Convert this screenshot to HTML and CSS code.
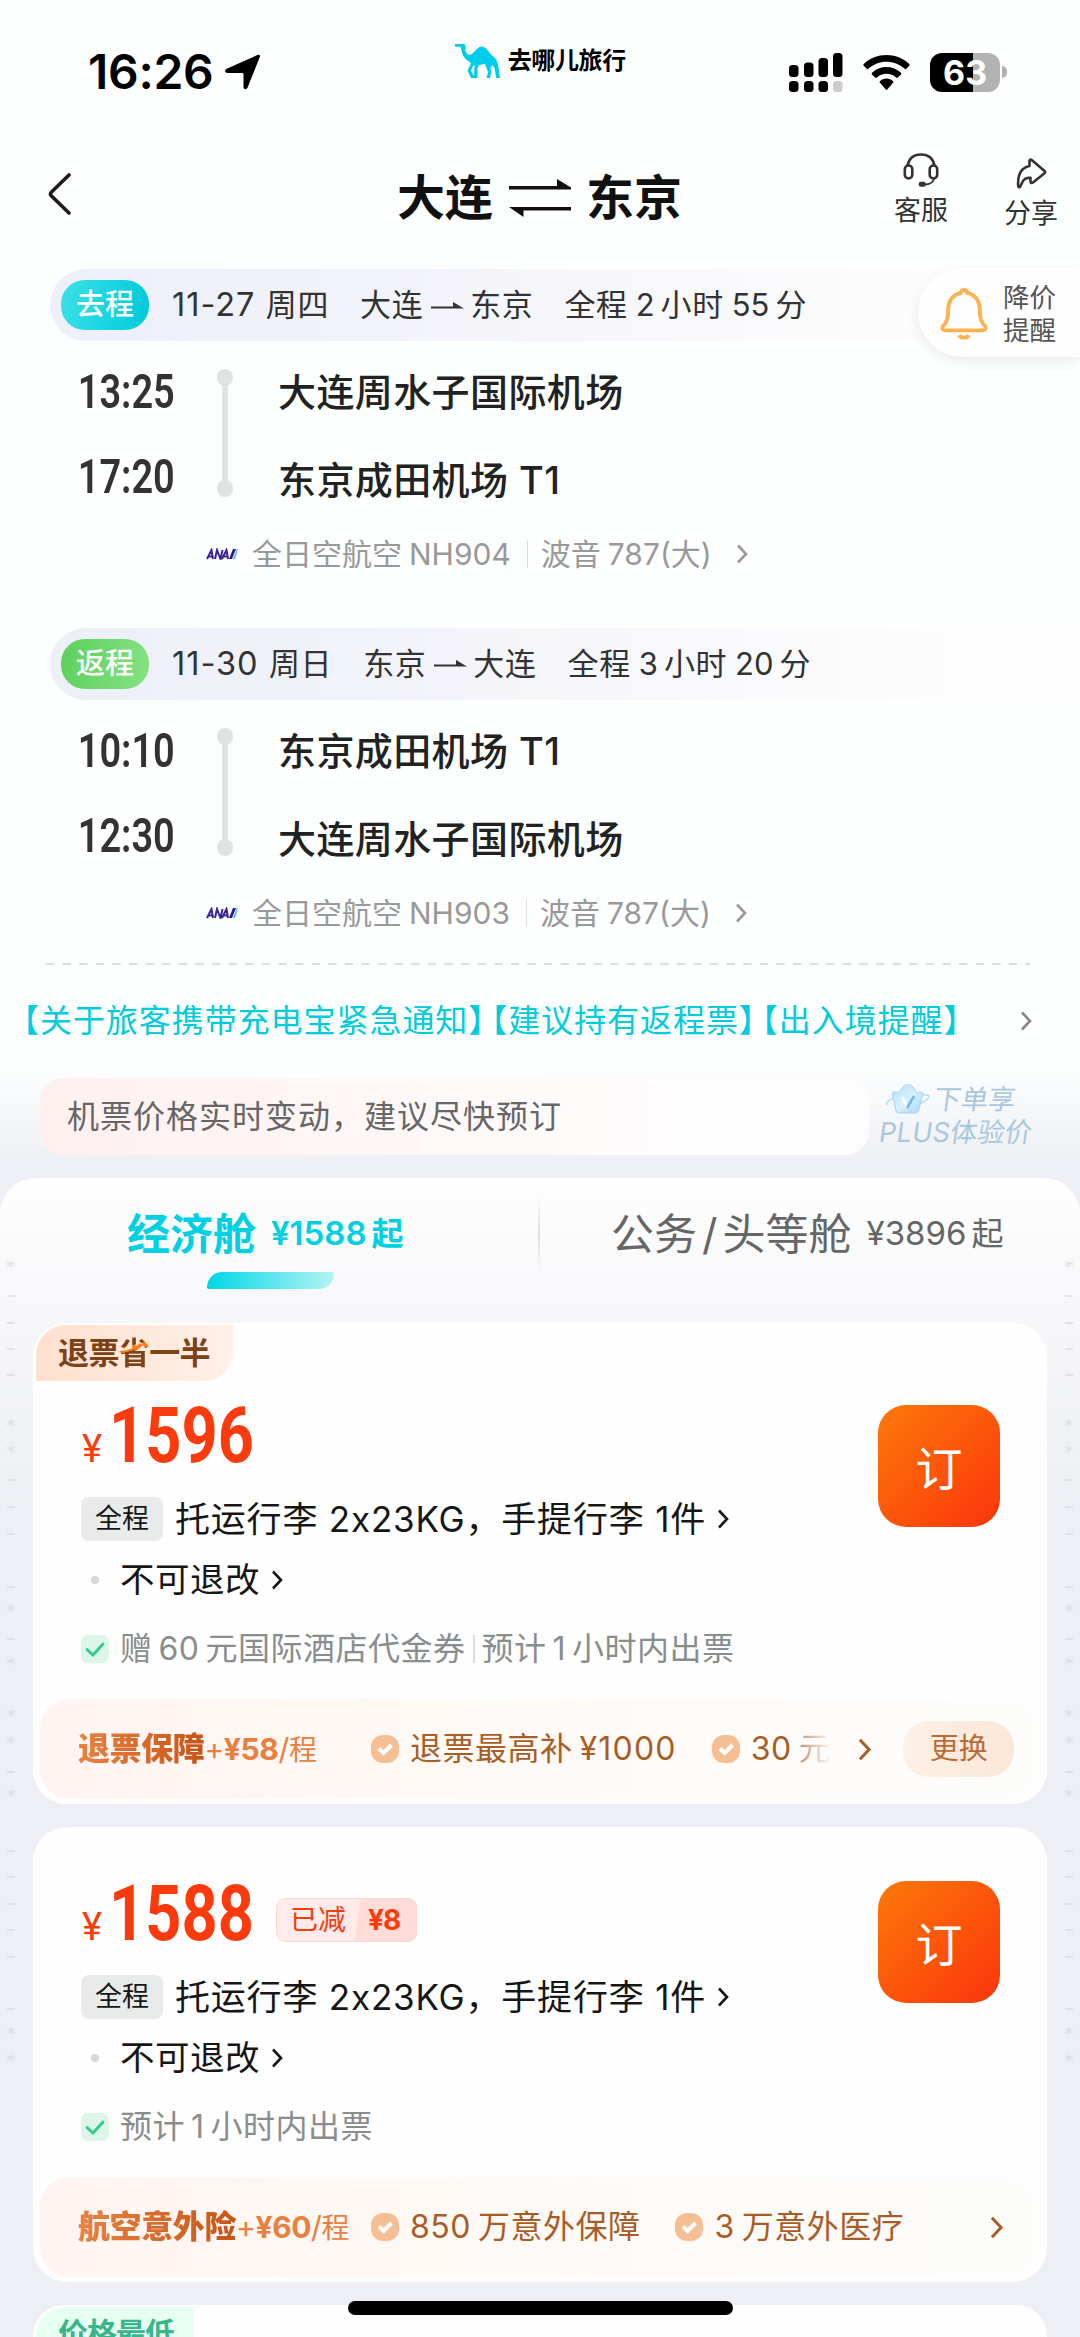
FILE: index.html
```html
<!DOCTYPE html>
<html lang="zh-CN">
<head>
<meta charset="utf-8">
<title>大连 - 东京</title>
<link rel="stylesheet" href="styles.css">
</head>
<body>
<svg class="defs" width="0" height="0">
  <defs>
    <linearGradient id="crownFill" x1="0" y1="0" x2="1" y2="1"><stop offset="0" stop-color="#b5def9"/><stop offset="0.5" stop-color="#d8f0ff"/><stop offset="1" stop-color="#a6d5f5"/></linearGradient>
    <symbol id="chev" viewBox="0 0 12 20"><path d="M2 1.5 10 10 2 18.5" fill="none" stroke="currentColor" stroke-width="2.6"/></symbol>
    <symbol id="tick" viewBox="0 0 28 28"><rect width="28" height="28" rx="7" fill="#dcf7ea"/><path d="M6 14.5 12 20 22 9" fill="none" stroke="#2fcb8b" stroke-width="2.8" stroke-linecap="round"/></symbol>
    <symbol id="seal" viewBox="0 0 28 28"><rect width="28" height="28" rx="12" fill="#f6bf93"/><path d="M8 13.5 12.6 18 20.5 10" fill="none" stroke="#fff" stroke-width="4"/></symbol>
    <symbol id="fly" viewBox="0 0 34 12"><path d="M0 7.500h33L22 1v4.500H0z" fill="#333"/></symbol>
    <symbol id="ana" viewBox="0 0 32 12"><path d="M1 11 5.5 2 7 11M3 8.5h4M9 11l2-9 3.500 9 2-9M16 11l4.500-9L22 11M18 8.500h4" fill="none" stroke="#3c2696" stroke-width="2"/><path d="M23 11 27 1h3l-4 10z" fill="#2a1a8c"/><path d="m27 11 4-10h1l-3 10z" fill="#46b5ef"/></symbol>
    <symbol id="ruler" viewBox="0 0 8 810">
      <g stroke="#d9dbe0" stroke-width="1.6">
        <path d="M0 35h8M0 62h8M0 88h8M0 114h8M0 219h8M0 246h8M0 273h8M0 326h8M0 378h8M0 511h8M0 590h8M0 616h8M0 643h8M0 669h8M0 696h8M0 748h8"/>
        <path d="M4-1v8M0 1l8 4M8 1 0 5M4 158v8M0 160l8 4M8 160l-8 4M4 184v8M0 186l8 4M8 186l-8 4M4 343v8M0 345l8 4M8 345l-8 4M4 396v8M0 398l8 4M8 398l-8 4M4 448v8M0 450l8 4M8 450l-8 4M4 475v8M0 477l8 4M8 477l-8 4M4 528v8M0 530l8 4M8 530l-8 4M4 766v8M0 768l8 4M8 768l-8 4M4 793v8M0 795l8 4M8 795l-8 4" stroke-width="1.100"/>
      </g>
    </symbol>
  </defs>
</svg>

<div class="screen">
  <header class="status">
    <span class="clock">16:26</span>
    <svg class="locate" viewBox="0 0 36 36"><path d="M34.800 3 22.500 33.800c-.9 2-4 1.800-4-.6V20.500c0-1-.5-1.500-1.500-1.500H2.500c-2.600 0-3.200-3-.8-4.200L33 .8c1.500-.6 2.500.7 1.800 2.200z"/></svg>
    <span class="brand">
      <svg class="camel" viewBox="0 0 46 34"><path fill="#00cdec" d="M0 0h9.500l1 2v5c1.500 3.500 3.500 4.500 5.500 3.500 3-1.500 5-5.500 8.500-7.500 2.500-1.300 5-.5 7 2l5 6c4.500 3 6.500 7 7 12.500L45 34h-3.800l-1.700-10-2-3-2 3 .8 4.500L35 34h-3.500l1.500-6-3-8-6 1-1.500 3V34H19l.5-13-1.500 1-2 4.500 4 7.500h-4l-3.500-7.500 3.500-7-2.500-2.500C9.500 15 7 11 6 4L5 2.800H0z"/></svg>
      <span>去哪儿旅行</span>
    </span>
    <svg class="signal" viewBox="0 0 54 39"><rect y="12" width="9.500" height="12" rx="3.500"/><rect x="15" y="9.500" width="9.500" height="14.500" rx="3.500"/><rect x="29.500" y="5" width="9.500" height="19" rx="3.500"/><rect x="44" width="9.500" height="24" rx="3.500"/><rect y="28" width="9.500" height="11" rx="3.500"/><rect x="15" y="28" width="9.500" height="11" rx="3.500"/><rect x="29.500" y="28" width="9.500" height="11" rx="3.500"/><rect x="44" y="28" width="9.500" height="11" rx="3.500" fill="#ccc"/></svg>
    <svg class="wifi" viewBox="0 0 47 35"><path d="M23.500 0C32 0 40 3 46 8.800c.8.700.8 1.500.1 2.200L43.500 13.600c-.7.700-1.400.7-2.100 0C36.500 9 30 6.700 23.500 6.700S10.500 9 5.600 13.600c-.7.700-1.400.7-2.100 0L.9 11c-.7-.7-.7-1.500.1-2.200C7 3 15 0 23.500 0zM23.500 12c5.500 0 10.500 2 14.200 5.500.8.700.8 1.500.1 2.200l-2.700 2.600c-.7.700-1.400.7-2.100.1-2.600-2.400-6-3.700-9.500-3.700s-6.900 1.300-9.500 3.700c-.7.600-1.400.6-2.100-.1l-2.700-2.600c-.7-.7-.7-1.500.1-2.200C13 14 18 12 23.500 12zM23.500 23.500c2.600 0 4.800.9 6.400 2.400.7.700.7 1.300.1 1.900l-5.500 6.400c-.6.700-1.400.7-2 0L17 27.800c-.6-.6-.6-1.200.1-1.900 1.600-1.500 3.800-2.400 6.400-2.400z"/></svg>
    <span class="battery">63</span><i class="cap"></i>
  </header>

  <nav class="nav">
    <svg class="back" viewBox="0 0 24 42"><path d="M22 2 4.500 19c-1.500 1.500-1.500 2.500 0 4L22 40" fill="none" stroke="#1c1c1c" stroke-width="3.600" stroke-linecap="round"/></svg>
    <h1 class="title"><span>大连</span><svg class="swap" viewBox="0 0 62 38"><path d="M0 7h48V0l14 8.500v2H0zM62 28h0H0l14.500 10v-6.500H62z" fill="#111"/></svg><span>东京</span></h1>
    <div class="tool help">
      <svg width="36" height="34" viewBox="0 0 36 34" fill="none" stroke="#333" stroke-width="2.600"><path d="M4.500 12.500C6 5 11 1.500 18 1.500S30 5 31.500 12.500"/><rect x="1.800" y="12.500" width="7.500" height="13" rx="3.700"/><rect x="26.700" y="12.500" width="7.500" height="13" rx="3.700"/><path d="M31 26c-1.500 4-4 5.500-9 5.500" stroke-width="1.800"/><rect x="17" y="30" width="4.500" height="2.500" rx="1" fill="#333"/></svg>
      <span>客服</span>
    </div>
    <div class="tool share">
      <svg width="31" height="31" viewBox="0 0 31 31" fill="none" stroke="#333" stroke-width="2.600" stroke-linejoin="round"><path d="M13.500 2.800c0-1.200 1.200-1.700 2.200-.8L28.500 13c.9.800.9 1.500 0 2.300L17 24.500c-1.400 1-2.500.6-2.500-.7v-4c-3.500-.2-6 .5-7.800 3.700l-2.500 5c-.6 1-1.900.8-2-.4C1.500 18 4 10 13.500 8z"/></svg>
      <span>分享</span>
    </div>
  </nav>

  <main class="itinerary">
    <section class="leg">
      <div class="leg-head">
        <span class="way go">去程</span>
        <span class="date"><span>11-27</span> 周四</span>
        <span class="cities">大连<svg><use href="#fly"/></svg>东京</span>
        <span>全程<b>2</b>小时<b>55</b>分</span>
      </div>
      <div class="stops">
        <div class="times"><span>13:25</span><span>17:20</span></div>
        <div class="track"></div>
        <div class="ports"><span>大连周水子国际机场</span><span>东京成田机场 T1</span></div>
      </div>
      <div class="plane"><svg class="ana"><use href="#ana"/></svg><span>全日空航空<b>NH904</b></span><i></i><span>波音<b>787(</b>大<b class="par">)</b></span><svg class="chev"><use href="#chev"/></svg></div>
    </section>
    <section class="leg">
      <div class="leg-head">
        <span class="way return">返程</span>
        <span class="date"><span>11-30</span> 周日</span>
        <span class="cities">东京<svg><use href="#fly"/></svg>大连</span>
        <span>全程<b>3</b>小时<b>20</b>分</span>
      </div>
      <div class="stops">
        <div class="times"><span>10:10</span><span>12:30</span></div>
        <div class="track"></div>
        <div class="ports"><span>东京成田机场 T1</span><span>大连周水子国际机场</span></div>
      </div>
      <div class="plane"><svg class="ana"><use href="#ana"/></svg><span>全日空航空<b>NH903</b></span><i></i><span>波音<b>787(</b>大<b class="par">)</b></span><svg class="chev"><use href="#chev"/></svg></div>
    </section>
    <svg class="rule" viewBox="0 0 984 2"><path d="M0 1h984" stroke="#dcdedd" stroke-width="2" stroke-dasharray="8.300 8.300"/></svg>
    <div class="notice"><span>【关于旅客携带充电宝紧急通知】</span><span>【建议持有返程票】</span><span>【出入境提醒】</span><svg class="chev"><use href="#chev"/></svg></div>
  </main>

  <aside class="alert">
    <svg width="48" height="54" viewBox="0 0 50 54" fill="none" stroke="#ffb04f" stroke-width="4"><path d="M25 2c2 0 3 1 3.500 3C37 7 41.500 14 41.500 22c0 9 1 13 5 17 2 3 1 5-2 5h-39c-3 0-4-2-2-5 4-4 5-8 5-17C8.500 14 13 7 21.500 5 22 3 23 2 25 2z"/><path d="M20 49c1.500 3.500 8.500 3.500 10 0"/></svg>
    <span>降价<br>提醒</span>
  </aside>

  <div class="promo">
    <div class="tip">机票价格实时变动，建议尽快预订</div>
    <div class="plus">
      <div><svg width="46" height="30" viewBox="0 0 46 30"><path d="M2 21c-3-3 5-7 14-9M38 11c9-1 7 4-2 8" fill="none" stroke="#b5dcf4" stroke-width="1.500"/><path d="M7 9c2-1.500 4-1.500 6 0l5-6c3-3 7-3 10 0l4 6c2-1.500 4-1.500 6 0l-4 16c-.5 3-2 4-5 4H15c-3 0-4-1-4.500-4z" fill="url(#crownFill)" stroke="#a3d5f5"/><path d="m17 13 5 10" stroke="#fff" stroke-width="3"/><path d="m29 12-7 12" stroke="#75b9e6" stroke-width="2.500"/></svg>下单享</div>
      <div>PLUS体验价</div>
    </div>
  </div>

  <div class="fares">
    <div class="tabs">
      <div class="tab active"><strong>经济舱</strong><span>¥1588<em>起</em></span></div>
      <div class="tab"><strong>公务<i>/</i>头等舱</strong><span>¥3896<em>起</em></span></div>
    </div>

    <article class="card tagged">
      <span class="ribbon">退票<span class="save">省</span>一半</span>
      <div class="body">
        <div class="info">
          <div class="price"><small>¥</small><span class="num">1596</span></div>
          <div class="line bag"><span class="chip">全程</span><span>托运行李 2x23KG，手提行李 1件</span><svg class="chev"><use href="#chev"/></svg></div>
          <div class="line"><i class="dot"></i><span>不可退改</span><svg class="chev"><use href="#chev"/></svg></div>
          <div class="perk"><svg class="tick"><use href="#tick"/></svg><span>赠<b>60</b>元国际酒店代金券</span><i></i><span>预计<b class="one">1</b>小时内出票</span></div>
        </div>
        <button class="book">订</button>
      </div>
      <div class="cover">
        <span class="plan"><strong>退票保障</strong><em>+<b>¥58</b>/<small>程</small></em></span>
        <span class="benefit"><svg class="tick"><use href="#seal"/></svg>退票最高补<b>¥1000</b></span>
        <span class="benefit second cut"><svg class="tick"><use href="#seal"/></svg><b class="first">30</b><span class="fade">元</span></span>
        <svg class="chev"><use href="#chev"/></svg>
        <span class="swap-btn">更换</span>
      </div>
    </article>

    <article class="card">
      <div class="body">
        <div class="info">
          <div class="price"><small>¥</small><span class="num">1588</span><span class="off"><span>已减</span><b>¥8</b></span></div>
          <div class="line bag"><span class="chip">全程</span><span>托运行李 2x23KG，手提行李 1件</span><svg class="chev"><use href="#chev"/></svg></div>
          <div class="line"><i class="dot"></i><span>不可退改</span><svg class="chev"><use href="#chev"/></svg></div>
          <div class="perk"><svg class="tick"><use href="#tick"/></svg><span>预计<b class="one">1</b>小时内出票</span></div>
        </div>
        <button class="book">订</button>
      </div>
      <div class="cover">
        <span class="plan"><strong>航空意外险</strong><em>+<b>¥60</b>/<small>程</small></em></span>
        <span class="benefit"><svg class="tick"><use href="#seal"/></svg><b class="first">850</b>万意外保障</span>
        <span class="benefit second"><svg class="tick"><use href="#seal"/></svg><b class="first">3</b>万意外医疗</span>
        <svg class="chev last"><use href="#chev"/></svg>
      </div>
    </article>

    <article class="card tagged"><span class="ribbon green">价格最低</span></article>
    <svg class="ruler left"><use href="#ruler"/></svg>
    <svg class="ruler right"><use href="#ruler"/></svg>
  </div>
  <div class="home"></div>
</div>
</body>
</html>
```
FILE: styles.css
```css
* { box-sizing: border-box; }
body { margin: 0; background: #fdfdfd; font-family: "Inter", "Noto Sans CJK SC", sans-serif; color: #222; }
.defs { position: absolute; }
svg { display: block; flex: none; }
i, em { font-style: normal; }
b { font-weight: inherit; }
.screen { position: relative; width: 1080px; height: 2337px; overflow: hidden; background: linear-gradient(#fdfefe 1065px, #eeeff4 1165px); }

/* status bar */
.status { height: 144px; padding: 0 73px 0 88px; display: flex; align-items: center; color: #000; }
.clock { font-size: 48px; font-weight: 600; line-height: 56px; letter-spacing: -0.3px; width: 137px; white-space: nowrap; }
.locate { width: 36px; height: 36px; }
.brand { display: flex; align-items: center; gap: 7px; margin-left: 194px; padding-bottom: 22px; font-size: 24px; font-weight: 700; line-height: 34px; letter-spacing: -0.4px; width: 335px; }
.camel { width: 46px; height: 34px; }
.signal { width: 54px; height: 39px; }
.wifi { width: 47px; height: 35px; margin-left: 20px; }
.battery { width: 70px; height: 39px; margin-left: 20px; border-radius: 12px; background: linear-gradient(90deg, #000 62%, #b2b2b2 62%); color: #fff; font-size: 34px; line-height: 39px; font-weight: 700; text-align: center; }
.cap { width: 5px; height: 12px; margin-left: 2px; border-radius: 0 6px 6px 0; background: #b2b2b2; }

/* navigation */
.nav { height: 125px; display: flex; align-items: flex-start; padding-left: 47px; }
.back { width: 24px; height: 42px; margin-top: 29px; }
.title { display: flex; align-items: center; margin: 22px 0 0 326px; font-size: 48px; line-height: 64px; font-weight: 700; color: #111; width: 286px; }
.swap { width: 62px; height: 38px; margin: 0 15px 0 16px; }
.tool { display: flex; flex-direction: column; align-items: center; font-size: 27px; line-height: 32px; color: #333; }
.help { margin: 9px 0 0 211px; gap: 8px; }
.share { margin: 14px 0 0 56px; gap: 9px; }

/* itinerary */
.itinerary { height: 809px; }
.leg { height: 358.5px; }
.leg-head { height: 72px; margin-left: 50px; padding-left: 11px; border-radius: 36px 0 0 36px; background: linear-gradient(90deg, #edeff9 0, #f2f3f9 30%, #fdfdfd 900px); display: flex; align-items: center; font-size: 31px; line-height: 40px; color: #333; letter-spacing: 0.6px; }
.leg-head b { margin: 0 6px 0 8px; letter-spacing: 0; }
.way { width: 88px; height: 50px; border-radius: 24px; color: #fff; font-size: 29px; line-height: 50px; text-align: center; font-weight: 500; letter-spacing: 0; }
.go { background: linear-gradient(100deg, #3be0e6, #00cad9); }
.return { background: linear-gradient(100deg, #5bd05b, #86e283); }
.date { margin-left: 23px; word-spacing: 1px; }
.date span { font-size: 32.5px; letter-spacing: 1px; }
.cities { display: flex; align-items: center; margin: 0 31px; }
.cities svg { width: 34px; height: 12px; margin: 3px 5px 0 8px; }
.stops { display: flex; height: 171px; padding: 25px 0 0 74px; }
.times { width: 101px; display: flex; flex-direction: column; gap: 33px; align-items: flex-end; font-family: "Roboto", sans-serif; font-weight: 600; font-size: 48px; line-height: 52px; color: #333; }
.times span { transform: scaleX(0.79); transform-origin: right; }
.track { position: relative; width: 16px; height: 128px; margin: 3px 0 0 42px; background: linear-gradient(#e0e4e4, #e0e4e4) center / 6px 112px no-repeat; }
.track::before, .track::after { content: ""; position: absolute; left: 0; width: 16px; height: 17px; border-radius: 8px; background: #dfe3e3; }
.track::before { top: 0; }
.track::after { bottom: 0; }
.ports { margin-left: 45px; display: flex; flex-direction: column; gap: 36px; font-size: 38px; line-height: 52px; font-weight: 500; letter-spacing: 0.4px; color: #222; }
.plane { display: flex; align-items: center; height: 84px; padding-left: 206px; font-size: 30px; line-height: 40px; color: #999; }
.ana { width: 32px; height: 12px; margin-right: 14px; }
.plane b { margin-left: 7px; }
.plane b.par { margin: 0; }
.plane i { width: 1px; height: 28px; background: #ddd; margin: 0 13px 0 16px; }
.chev { width: 12px; height: 20px; }
.plane .chev { margin-left: 24px; }
.rule { width: 984px; height: 2px; margin: -23px 0 0 46px; }
.notice { display: flex; align-items: center; height: 111px; padding-left: 23px; font-size: 32px; line-height: 44px; color: #00ccdc; letter-spacing: 0.95px; white-space: nowrap; }
.notice span { font-feature-settings: "halt"; margin-right: 6px; }
.notice .chev { color: #888; margin-left: auto; margin-right: 48px; }

/* price alert */
.alert { position: absolute; top: 268px; right: 0; width: 162px; height: 89px; border-radius: 45px 0 0 45px; background: #fefefe; box-shadow: 0 4px 14px rgba(0,0,0,.08); display: flex; align-items: center; gap: 15px; padding: 3px 0 0 22px; font-size: 26.5px; line-height: 33px; color: #555; }

/* promo strip */
.promo { height: 100px; display: flex; padding-left: 40px; gap: 11px; }
.tip { width: 829px; height: 77px; border-radius: 24px; background: linear-gradient(90deg, #fff0f0, #fefdfd 80%); padding-left: 27px; font-size: 32px; line-height: 77px; letter-spacing: 1px; color: #666; }
.plus { font-size: 27px; line-height: 33px; color: #a9c7dd; padding-top: 5px; letter-spacing: 0.3px; transform: skewX(-8deg); }
.plus div { display: flex; }
.plus svg { margin: 1px 3px 0 1px; transform: skewX(8deg); }

/* fares */
.fares { position: relative; height: 1159px; border-radius: 36px 36px 0 0; background: linear-gradient(#fefefe, #f1f2f6 240px, #eeeff4 340px); }
.tabs { position: relative; height: 145px; display: grid; grid-template-columns: 539px 541px; }
.tabs::after { content: ""; position: absolute; left: 538px; top: 18px; width: 2px; height: 76px; background: linear-gradient(transparent, #ddd, transparent); }
.tab { position: relative; display: flex; align-items: center; height: 106px; padding-left: 72px; color: #666; }
.tab strong { font-size: 43px; font-weight: 400; }
.tab strong i { margin: 0 5px; }
.tab > span { font-size: 33px; margin-left: 15px; }
.tab em { margin-left: 5px; font-size: 32px; }
.tab.active { padding-left: 127px; color: #00d0e2; }
.tab.active strong, .tab.active span { font-weight: 600; }
.tab.active::after { content: ""; position: absolute; left: 207px; top: 94px; width: 127px; height: 17px; border-radius: 17px 2px 17px 2px; background: linear-gradient(90deg, #00d7e6, #b5f3f5); }
.card { width: 1014px; margin: 0 auto 23px; padding: 0 7px 5px; border-radius: 34px; background: #fefefe; }
.card:not(.tagged) { padding-top: 30px; }
.card.tagged .book { margin-top: 26px; }
.ribbon { display: block; width: 197px; height: 56px; margin-left: -4px; position: relative; top: 2px; padding-left: 22px; border-radius: 30px 0 30px 0; background: linear-gradient(90deg, #fee0cf, #fff0e8); color: #7c4218; font-size: 31px; line-height: 56px; font-weight: 700; letter-spacing: -0.6px; }
.save { background: linear-gradient(165deg, #7c4218 32%, #ff7a15 33%, #ff7a15 44%, #7c4218 45%); -webkit-background-clip: text; background-clip: text; color: transparent; }
.green { width: 158px; background: #e5fff2; color: #3cb58c; font-size: 30px; letter-spacing: -1px; line-height: 52px; }
.body { display: flex; justify-content: space-between; height: 320px; padding: 0 40px 0 41px; }
.price { display: flex; align-items: baseline; height: 110px; padding-top: 12px; color: #fb3b0d; font-family: "Roboto", sans-serif; }
.price small { font-size: 38px; width: 27px; margin-left: 1px; }
.num { font-size: 78px; line-height: 90px; font-weight: 700; width: 147px; transform: scaleX(.81); transform-origin: left; white-space: nowrap; }
.off { align-self: center; position: relative; top: 2px; display: flex; margin-left: 20px; width: 141px; height: 44px; border: 1px solid #ffd8d0; border-radius: 9px; background: linear-gradient(98deg, #ffecea 57%, #ffdcd7 58%); font-size: 28px; line-height: 42px; padding-left: 13px; gap: 22px; font-family: "Inter", "Noto Sans CJK SC", sans-serif; }
.off b { font-weight: 700; letter-spacing: -1px; }
.line { display: flex; align-items: center; height: 62px; font-size: 34.5px; line-height: 50px; color: #161616; white-space: nowrap; letter-spacing: 0.5px; }
.line.bag { height: 60px; font-size: 35px; letter-spacing: 0.8px; }
.chip { width: 82px; height: 44px; margin-right: 12px; border-radius: 8px; background: #e9ebeb; font-size: 27px; line-height: 44px; text-align: center; letter-spacing: 0; }
.line .chev { margin-left: 11px; }
.dot { width: 8px; height: 8px; margin: 0 21px 0 10px; border-radius: 4px; background: #d5d8d8; }
.perk { display: flex; align-items: center; height: 76px; font-size: 32px; line-height: 44px; color: #8a8d8d; letter-spacing: 0.5px; }
.tick { width: 28px; height: 28px; margin-right: 11px; }
.perk b { margin: 0 6px; }
.perk i { width: 2px; height: 28px; margin: 0 7px; background: #ddd; }
.book { width: 122px; height: 122px; margin-top: 24px; padding: 0; border: 0; border-radius: 28px; background: linear-gradient(135deg, #fd7909, #fb340c); color: #fff; font: 400 47px/120px "Noto Sans CJK SC", sans-serif; }
.cover { display: flex; align-items: center; height: 100px; padding-left: 38px; border-radius: 30px; background: linear-gradient(90deg, #fff4f1, #fef9f5 40%, #fdfdfc); color: #a85d27; font-size: 32px; line-height: 44px; white-space: nowrap; }
.plan { width: 293px; display: flex; color: #e8803f; letter-spacing: -0.4px; }
.plan strong { font-weight: 800; background: linear-gradient(90deg, #ea8140, #c65517); -webkit-background-clip: text; background-clip: text; color: transparent; }
.plan b { font-weight: 700; }
.plan em { font-size: 30px; }
.plan small { font-size: 28px; }
.benefit { display: flex; align-items: center; letter-spacing: 0.5px; }
.benefit b { margin-left: 7px; letter-spacing: 1.2px; }
.benefit b.first { margin: 0 7px 0 0; letter-spacing: 0.5px; }
.second { margin-left: 35px; }
.fade { background: linear-gradient(90deg, #a85d27aa, transparent); -webkit-background-clip: text; background-clip: text; color: transparent; }
.cover .chev { width: 17px; height: 23px; margin-left: 25px; }
.cover .last { margin-left: auto; margin-right: 35px; }
.swap-btn { width: 111px; height: 56px; margin-left: 30px; border-radius: 26px; background: linear-gradient(90deg, #fdf0e5, #fbe7d8); color: #b96b35; font-size: 29px; line-height: 56px; text-align: center; }
.ruler { position: absolute; top: 83px; width: 8px; height: 810px; }
.left { left: 7px; }
.right { right: 7px; }
.home { position: absolute; left: 348px; top: 2301px; width: 385px; height: 14px; border-radius: 7px; background: #000; }
```
